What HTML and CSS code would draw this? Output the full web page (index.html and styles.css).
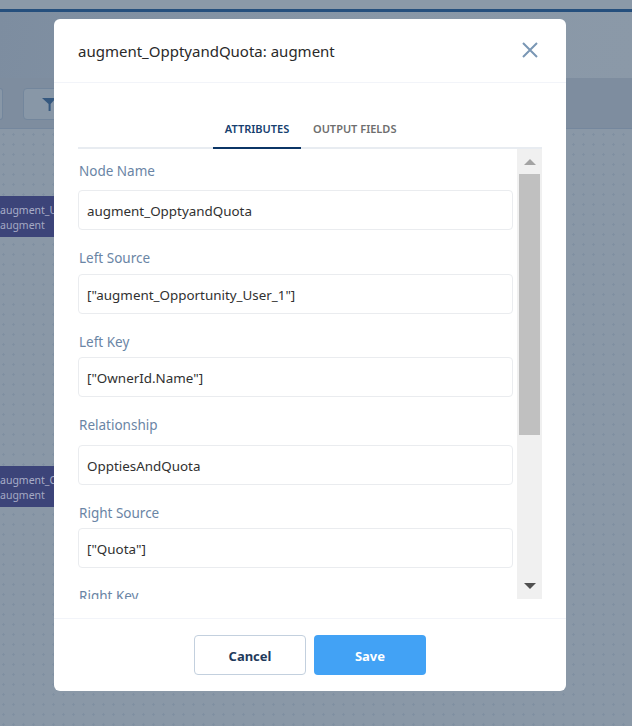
FILE: index.html
```html
<!DOCTYPE html>
<html lang="en">
<head>
<meta charset="utf-8">
<title>augment_OpptyandQuota</title>
<link rel="stylesheet" href="styles.css">
</head>
<body>
<div class="app">
  <div class="topstrip"></div>
  <div class="headerband"></div>
  <div class="toolbar">
    <div class="toolbtn toolbtn-left"></div>
    <div class="toolbtn toolbtn-filter">
      <svg class="filter-icon" width="14" height="14" viewBox="0 0 14 14"><path d="M0 1h14L8.6 7v7H6.6V7z" fill="#35587f"/></svg>
    </div>
  </div>
  <div class="canvas">
    <div class="node node-a"><span>augment_U</span><span class="node-sub">augment</span></div>
    <div class="node node-b"><span>augment_O</span><span class="node-sub">augment</span></div>
  </div>
</div>

<div class="modal">
  <header class="modal-head">
    <h1 class="modal-title">augment_OpptyandQuota: augment</h1>
    <svg class="close" width="16" height="16" viewBox="0 0 16 16"><path d="M1 1l14 14M15 1L1 15" stroke="#7a97b5" stroke-width="2" fill="none"/></svg>
  </header>
  <div class="modal-body">
    <nav class="tabs">
      <span class="tab tab-active">ATTRIBUTES</span>
      <span class="tab">OUTPUT FIELDS</span>
    </nav>
    <div class="panel">
      <div class="form">
        <label class="label label-first">Node Name</label>
        <div class="input">augment_OpptyandQuota</div>
        <label class="label">Left Source</label>
        <div class="input">["augment_Opportunity_User_1"]</div>
        <label class="label">Left Key</label>
        <div class="input">["OwnerId.Name"]</div>
        <label class="label label-wide">Relationship</label>
        <div class="input">OpptiesAndQuota</div>
        <label class="label">Right Source</label>
        <div class="input">["Quota"]</div>
        <label class="label">Right Key</label>
      </div>
      <div class="scrollbar">
        <div class="arrow arrow-up"></div>
        <div class="thumb"></div>
        <div class="arrow arrow-down"></div>
      </div>
    </div>
  </div>
  <footer class="modal-foot">
    <button class="btn btn-cancel">Cancel</button>
    <button class="btn btn-save">Save</button>
  </footer>
</div>
</body>
</html>
```
FILE: styles.css
```css
* { box-sizing: border-box; }
html, body { margin: 0; height: 100%; }
body {
  font-family: "Noto Sans", sans-serif;
  overflow: hidden;
  background: #8a98a7;
}
.app {
  width: 632px;
  height: 726px;
  display: flex;
  flex-direction: column;
}
.topstrip {
  height: 12px;
  background: #8b99a8;
  border-bottom: 3px solid #254f7d;
}
.headerband {
  height: 66px;
  background: linear-gradient(100deg, #7d8da0 0%, #8897a7 60%, #8b99a8 100%);
}
.toolbar {
  height: 51px;
  background: #7e8d9f;
  border-bottom: 1px solid #75879d;
  display: flex;
  align-items: flex-start;
  gap: 20px;
  padding-top: 10px;
}
.toolbtn {
  height: 32px;
  background: #8897a7;
  border: 1px solid #73869c;
  border-radius: 4px;
}
.toolbtn-left { width: 3px; border-left: 0; border-radius: 0 4px 4px 0; }
.toolbtn-filter { width: 60px; padding: 8px 0 0 18px; }
.filter-icon { display: block; }
.canvas {
  flex: 1;
  position: relative;
  background-color: #8a98a7;
  background-image: radial-gradient(circle at 1.5px 1.5px, #8090a2 1.2px, transparent 1.3px);
  background-size: 10px 10px;
  background-position: 2px 4px;
}
.node {
  position: absolute;
  left: 0;
  width: 60px;
  height: 41px;
  background: #3c4479;
  color: #a9aec8;
  font-size: 10.5px;
  line-height: 15px;
  padding: 7px 0 0 0;
  display: flex;
  flex-direction: column;
  white-space: nowrap;
}
.node-sub { color: #a4a9c3; }
.node-a { top: 67px; }
.node-b { top: 337px; }
.modal {
  position: absolute;
  left: 54px;
  top: 19px;
  width: 512px;
  height: 672px;
  background: #fff;
  border-radius: 6px;
  display: flex;
  flex-direction: column;
}
.modal-head {
  height: 64px;
  flex: none;
  border-bottom: 1px solid #f2f4f9;
  display: flex;
  align-items: center;
  justify-content: space-between;
  padding: 0 28px 0 24px;
}
.modal-title {
  margin: 0;
  font-size: 15px;
  font-weight: 400;
  color: #2a2a2a;
}
.close { display: block; margin-top: -1px; }
.modal-body {
  flex: 1;
  padding: 0 24px;
  min-height: 0;
  display: flex;
  flex-direction: column;
}
.tabs {
  height: 66px;
  flex: none;
  display: flex;
  justify-content: flex-start;
  align-items: flex-end;
  border-bottom: 2px solid #e8ecf1;
  padding-left: 135px;
  gap: 12px;
}
.tab {
  height: 40px;
  margin-bottom: -2px;
  padding-top: 11px;
  text-align: center;
  font-size: 11px;
  line-height: 18px;
  font-weight: 600;
  color: #6e6e6e;
  white-space: nowrap;
}
.tab-active {
  width: 88px;
  color: #16406f;
  border-bottom: 2px solid #0b3566;
}
.panel {
  height: 450px;
  flex: none;
  display: flex;
  overflow: hidden;
}
.form {
  flex: 1;
  min-width: 0;
  padding-right: 4px;
  overflow: hidden;
}
.label {
  display: block;
  margin-left: 1px;
  padding-top: 19px;
  height: 43.5px;
  font-size: 13.5px;
  line-height: 18px;
  color: #6a85a5;
}
.label-first { padding-top: 13px; height: 41px; }
.label-wide { height: 47.5px; }
.input {
  height: 40px;
  border: 1px solid #eaecef;
  border-radius: 4px;
  padding: 0 8px;
  font-size: 13.4px;
  line-height: 40px;
  color: #303030;
  white-space: nowrap;
}
.scrollbar {
  width: 25px;
  flex: none;
  background: #f0f0f0;
  display: flex;
  flex-direction: column;
  align-items: center;
  padding: 0 2px;
}
.thumb {
  width: 21px;
  height: 261px;
  background: #c0c0c0;
  flex: none;
}
.arrow {
  flex: none;
  width: 0;
  height: 0;
  border-left: 6px solid transparent;
  border-right: 6px solid transparent;
}
.arrow-up {
  border-bottom: 6px solid #a3a3a3;
  margin: 10px 0 9px;
}
.arrow-down {
  border-top: 6px solid #505050;
  margin-top: 148px;
}
.modal-foot {
  height: 73px;
  flex: none;
  border-top: 1px solid #f2f4f9;
  display: flex;
  justify-content: center;
  gap: 8px;
  padding-top: 16px;
}
.btn {
  width: 112px;
  height: 40px;
  border-radius: 4px;
  font-family: inherit;
  font-size: 13px;
  font-weight: 700;
  padding: 2px 0 0;
}
.btn-cancel {
  background: #fff;
  border: 1px solid #c3d0de;
  color: #1f3a5c;
}
.btn-save {
  background: #42a2f5;
  border: 0;
  color: #fff;
}
```
